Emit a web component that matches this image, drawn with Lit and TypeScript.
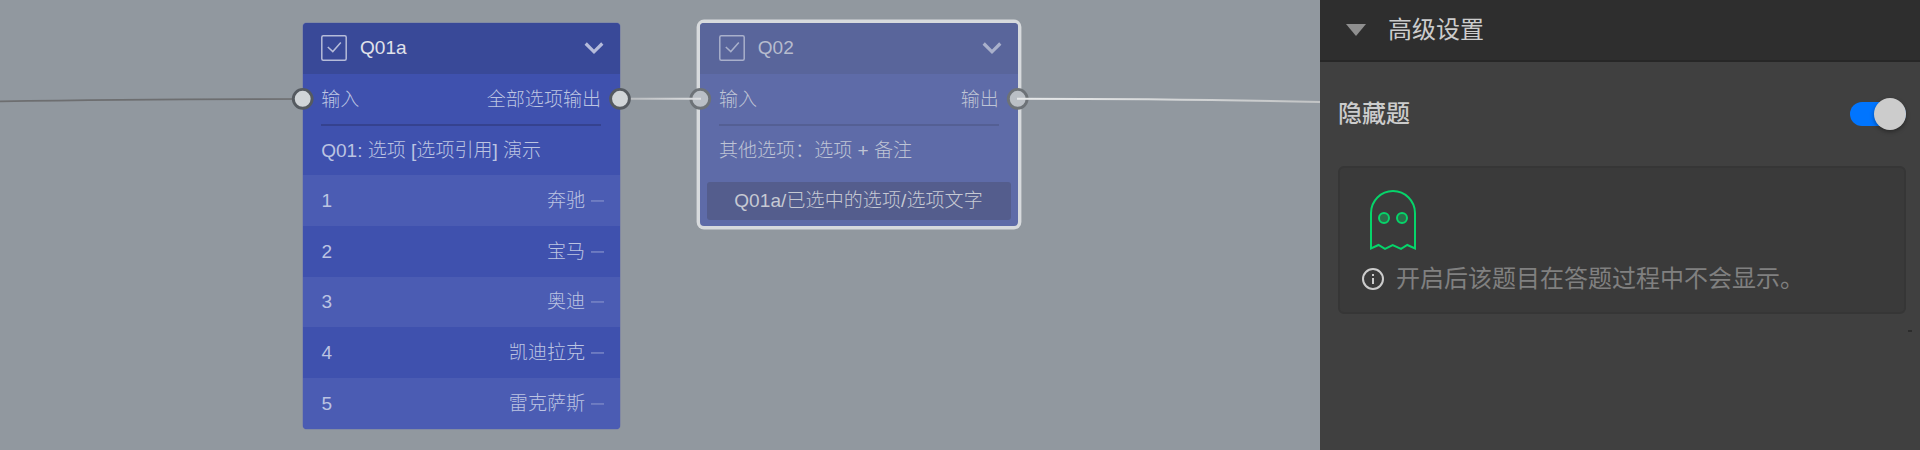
import { LitElement, html, css, svg } from "lit";
import { customElement, property } from "lit/decorators.js";

@customElement("flow-node")
class FlowNode extends LitElement {
  @property() name = "";
  @property() output = "";
  @property() caption = "";
  @property({ attribute: false }) options: string[] = [];
  @property() reference = "";
  @property({ type: Boolean, reflect: true }) selected = false;

  static styles = css`
    :host {
      display: block;
      box-sizing: border-box;
      width: 317.5px;
      border-radius: 4px;
      background: #3f51ae;
      color: #bcc4e2;
      font: 300 19.05px/24px "Liberation Sans", "Noto Sans CJK SC", sans-serif;
      box-shadow: 0 0 0 0.8px #7e86a5;
      white-space: nowrap;
      overflow: hidden;
    }
    :host([selected]) {
      background: #5e6ba8;
      color: #bec4d5;
      box-shadow: 0 0 0 3.4px #d7dadd;
      padding-bottom: 6.6px;
    }
    .head {
      height: 50.8px;
      box-sizing: border-box;
      padding: 0 16px 0 18.5px;
      display: flex;
      align-items: center;
      background: #394998;
      color: #e0e2ea;
    }
    :host([selected]) .head { background: #59659b; color: #b7bcce; }
    .box { width: 26px; height: 26px; margin-right: 13px; color: #b6bcd9; flex: none; }
    .chev { width: 20px; height: 14px; margin-left: auto; color: #b5bbdb; }
    :host([selected]) .box, :host([selected]) .chev { color: #a9b0cb; }
    .io {
      height: 52.6px;
      margin: 0 19px 0 18.7px;
      display: flex;
      align-items: center;
      justify-content: space-between;
      box-sizing: border-box;
      padding-top: 2px;
      border-bottom: 2px solid #35428f;
    }
    :host([selected]) .io { border-color: #545f94; }
    .caption { height: 48.95px; display: flex; align-items: center; padding: 0 16px 0 18.7px; }
    .option {
      box-sizing: border-box;
      height: 50.75px;
      display: flex;
      align-items: center;
      justify-content: space-between;
      padding: 2px 16px 1.4px 19px;
    }
    .option.odd { background: #4b5cb3; }
    .value { display: flex; align-items: center; gap: 6px; }
    .dash { width: 13px; height: 2px; fill: #7985c6; }
    .ref {
      box-sizing: border-box;
      height: 38px;
      margin: 6.4px 6.5px 0;
      padding-top: 1px;
      display: flex;
      align-items: center;
      justify-content: center;
      border-radius: 3px;
      background: #545d8d;
      color: #c6c9d3;
    }
    .ref span { margin-left: -1px; letter-spacing: 0.07px; }
  `;

  render() {
    return html`
      <div class="head">
        <svg class="box" viewBox="0 0 26 26" fill="none" stroke="currentColor">
          <rect x="0.8" y="0.8" width="24.4" height="24.4" rx="1.5" stroke-width="1.5" />
          <path d="M6.8 12l5 4.6 8-9" stroke-width="1.5" />
        </svg>
        <span>${this.name}</span>
        <svg class="chev" viewBox="0 0 20 14" fill="none" stroke="currentColor" stroke-width="3.2">
          <path d="M1.7 2.5L10 10.8l8.3-8.3" />
        </svg>
      </div>
      <div class="io"><span>输入</span><span>${this.output}</span></div>
      <div class="caption">${this.caption}</div>
      ${this.options.map(
        (o, i) => html`<div class="option ${i % 2 ? "" : "odd"}">
          <span>${i + 1}</span>
          <span class="value">${o}<svg class="dash" viewBox="0 0 13 2"><rect y="0.2" width="13" height="1.5" /></svg></span>
        </div>`
      )}
      ${this.reference ? html`<div class="ref"><span>${this.reference}</span></div>` : ""}
    `;
  }
}

@customElement("app-root")
class AppRoot extends LitElement {
  static styles = css`
    :host {
      display: flex;
      width: 1920px;
      height: 450px;
      overflow: hidden;
      font-family: "Noto Sans CJK SC", "Liberation Sans", sans-serif;
    }
    .canvas { position: relative; width: 1320px; background: #91989f; overflow: hidden; }
    .node { position: absolute; }
    .first { left: 302.5px; top: 22.8px; }
    .second { left: 700.3px; top: 22.8px; }
    .wires { position: absolute; left: 0; top: 0; width: 1320px; height: 450px; }
    .panel { width: 600px; background: #404040; color: #ccc; display: flex; flex-direction: column; }
    .title {
      height: 62px;
      box-sizing: border-box;
      border-bottom: 2px solid #272727;
      background: #2e2e2e;
      display: flex;
      align-items: center;
      padding-left: 26px;
      gap: 22px;
      font-size: 24px;
      line-height: 36px;
    }
    .row span { margin-bottom: 4px; }
    .title span, .note span { margin-bottom: 5px; }
    .tri { width: 20px; height: 12px; fill: #8f8f8f; }
    .row {
      height: 104px;
      padding: 0 14px 0 18px;
      display: flex;
      align-items: center;
      justify-content: space-between;
      font-size: 24px;
      line-height: 36px;
      font-weight: 500;
      color: #ccc;
    }
    .switch { display: flex; align-items: center; justify-content: flex-end; width: 56px; height: 24px; border-radius: 12px; background: #0075ff; }
    .knob { width: 32px; height: 32px; flex: none; border-radius: 50%; background: #ccc; box-shadow: 0 2px 4px rgba(0, 0, 0, 0.35); }
    .card {
      box-sizing: border-box;
      height: 148px;
      margin: 0 14px 0 18px;
      padding: 22px 0 0 22px;
      border: 2px solid #363636;
      border-radius: 6px;
      background: #3a3a3a;
    }
    .ghost { display: block; width: 50px; height: 62px; margin-left: 6px; }
    .note { display: flex; align-items: center; height: 36px; margin-top: 9px; gap: 12px; font-size: 24px; line-height: 36px; color: #808080; }
    .info { width: 22px; height: 22px; }
    .mark { width: 4px; height: 2px; margin: 16px 8px 0 auto; background: #2c2c2c; }
  `;

  private port(x: number, selected: boolean) {
    return svg`<circle cx=${x} cy="98.8" r="9.4"
      fill=${selected ? "#babfc5" : "#d1d5d8"}
      stroke=${selected ? "#6d7277" : "#555a60"} stroke-width="2.9" />`;
  }

  render() {
    return html`
      <div class="canvas">
        <flow-node class="node first" name="Q01a" output="全部选项输出"
          caption="Q01: 选项 [选项引用] 演示"
          .options=${["奔驰", "宝马", "奥迪", "凯迪拉克", "雷克萨斯"]}></flow-node>
        <flow-node class="node second" selected name="Q02" output="输出"
          caption="其他选项：选项 + 备注" reference="Q01a/已选中的选项/选项文字"></flow-node>
        <svg class="wires" viewBox="0 0 1320 450" fill="none">
          <defs>
            <linearGradient id="mid" gradientUnits="userSpaceOnUse" x1="620" y1="0" x2="702" y2="0">
              <stop stop-color="#b5b8bb" /><stop offset="1" stop-color="#dfe1e3" />
            </linearGradient>
            <linearGradient id="out" gradientUnits="userSpaceOnUse" x1="1017" y1="0" x2="1320" y2="0">
              <stop stop-color="#e8eaeb" /><stop offset="1" stop-color="#c2c4c5" />
            </linearGradient>
          </defs>
          <path d="M0 101.4Q130 99 302 99" stroke="#6d6e70" stroke-width="1.7" />
          ${this.port(302.7, false)}
          ${this.port(700.3, true)}
          ${this.port(1017.7, true)}
          <path d="M620 98.8L701 98.81" stroke="url(#mid)" stroke-width="2" />
          ${this.port(620, false)}
          <path d="M1017 98.7Q1180 98.8 1320 102" stroke="url(#out)" stroke-width="2" />
        </svg>
      </div>
      <div class="panel">
        <div class="title">
          <svg class="tri" viewBox="0 0 20 12"><path d="M0 0h20L10 12z" /></svg>
          <span>高级设置</span>
        </div>
        <div class="row">
          <span>隐藏题</span>
          <div class="switch"><div class="knob"></div></div>
        </div>
        <div class="card">
          <svg class="ghost" viewBox="0 0 50 62" fill="none" stroke="#06d46a" stroke-width="2">
            <path d="M3 58.5V23a22 22 0 0 1 44 0V58.5L39.3 55 33 58.8 24.7 55 17 58.8 10.5 55z" />
            <circle cx="16" cy="28" r="5" fill="#2a704a" />
            <circle cx="34" cy="28" r="5" fill="#2a704a" />
          </svg>
          <div class="note">
            <svg class="info" viewBox="0 0 22 22" fill="none" stroke="#ccc" stroke-width="2">
              <circle cx="11" cy="11" r="10" />
              <path d="M11 6v2M11 10v6" />
            </svg>
            <span>开启后该题目在答题过程中不会显示。</span>
          </div>
        </div>
        <div class="mark"></div>
      </div>
    `;
  }
}
